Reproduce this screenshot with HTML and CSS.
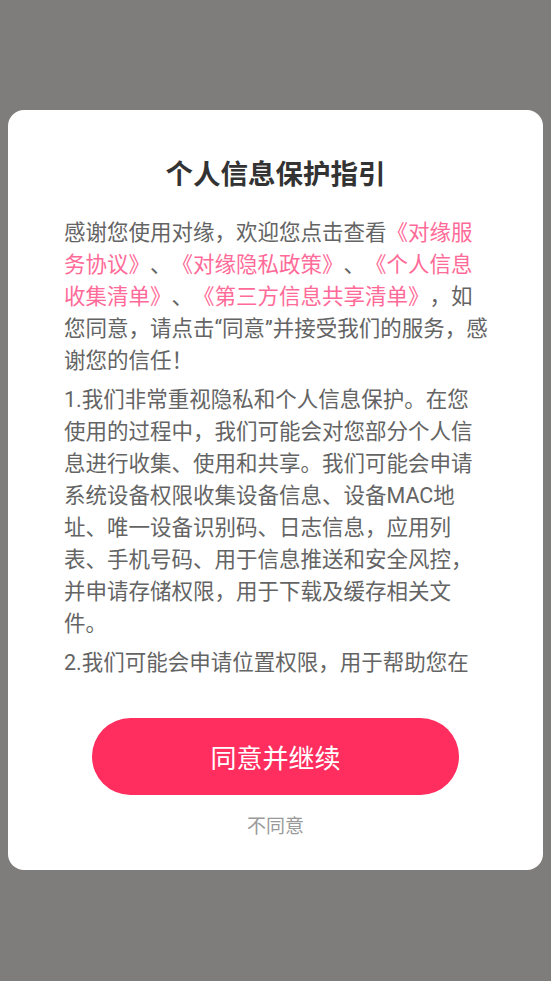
FILE: index.html
```html
<!DOCTYPE html>
<html lang="zh-CN">
<head>
<meta charset="utf-8">
<title>个人信息保护指引</title>
<link rel="stylesheet" href="styles.css">
</head>
<body>
<div class="dialog">
  <h1 class="title">个人信息保护指引</h1>
  <div class="content">
    <p class="para">感谢您使用对缘，欢迎您点击查看<span class="link">《对缘服务协议》</span>、<span class="link">《对缘隐私政策》</span>、<span class="link">《个人信息收集清单》</span>、<span class="link">《第三方信息共享清单》</span>，如您同意，请点击“同意”并接受我们的服务，感谢您的信任！</p>
    <p class="para">1.我们非常重视隐私和个人信息保护。在您使用的过程中，我们可能会对您部分个人信息进行收集、使用和共享。我们可能会申请系统设备权限收集设备信息、设备MAC地址、唯一设备识别码、日志信息，应用列表、手机号码、用于信息推送和安全风控，并申请存储权限，用于下载及缓存相关文件。</p>
    <p class="para">2.我们可能会申请位置权限，用于帮助您在使用过程中推荐附近的用户，您可以随时在系统设置中关闭该权限。</p>
  </div>
  <div class="actions">
    <button class="btn-agree">同意并继续</button>
    <button class="btn-decline">不同意</button>
  </div>
</div>
</body>
</html>
```

FILE: styles.css
```css
html, body {
  margin: 0;
  padding: 0;
}
body {
  background: #7f7d7b;
  font-family: Roboto, "Noto Sans CJK SC", sans-serif;
  width: 551px;
  height: 981px;
  overflow: hidden;
}
.dialog {
  margin: 110px 8px 0 8px;
  height: 760px;
  background: #ffffff;
  border-radius: 16px;
  box-sizing: border-box;
  padding: 46px 56px 0 56px;
  display: flex;
  flex-direction: column;
}
.title {
  margin: 0;
  font-size: 27.5px;
  line-height: 38px;
  font-weight: bold;
  color: #333333;
  text-align: center;
}
.content {
  margin-top: 23px;
  margin-right: -2px;
  height: 462px;
  overflow: hidden;
  text-spacing-trim: space-all;
}
.para {
  margin: 0 0 7px 0;
  font-size: 21.5px;
  line-height: 32px;
  color: #646464;
  text-spacing-trim: space-all;
}
.link {
  color: #ff6a98;
}
.actions {
  margin-top: 39px;
  display: flex;
  flex-direction: column;
  align-items: center;
}
.btn-agree {
  width: 367px;
  height: 77px;
  border: none;
  border-radius: 39px;
  background: #ff2e5f;
  color: #ffffff;
  font-family: Roboto, "Noto Sans CJK SC", sans-serif;
  font-size: 26px;
  padding: 0;
}
.btn-decline {
  margin-top: 17px;
  border: none;
  background: none;
  padding: 0;
  color: #9a9a9a;
  font-family: Roboto, "Noto Sans CJK SC", sans-serif;
  font-size: 19px;
  line-height: 30px;
}
```
